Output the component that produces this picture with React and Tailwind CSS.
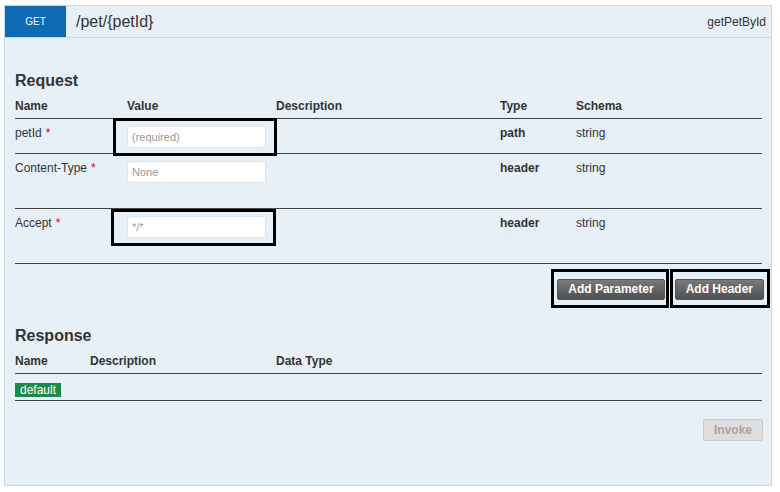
import React from 'react';

const font = { fontFamily: '"Liberation Sans", Arial, sans-serif' };

const params = [
  { name: 'petId', placeholder: '(required)', type: 'path', schema: 'string', tall: false, mark: 'a' },
  { name: 'Content-Type', placeholder: 'None', type: 'header', schema: 'string', tall: true, mark: null },
  { name: 'Accept', placeholder: '*/*', type: 'header', schema: 'string', tall: true, mark: 'b' },
];

const Field = ({ placeholder, mark }) => (
  <div className="relative w-[139px]">
    <input
      placeholder={placeholder}
      className="block h-[22px] w-full rounded-[3px] border border-[#dde4ec] bg-white px-[4px] text-[11px] text-[#333] placeholder:text-[#999] outline-none"
      style={font}
    />
    {mark === 'a' && (
      <span className="pointer-events-none absolute -left-[14px] -right-[11px] -top-[8px] -bottom-[8px] border-[3px] border-black"></span>
    )}
    {mark === 'b' && (
      <span className="pointer-events-none absolute -left-[16px] -right-[10px] -top-[7px] -bottom-[8px] border-[3px] border-black"></span>
    )}
  </div>
);

export default function App() {
  return (
    <div className="min-h-screen bg-white pl-[4px] pt-[5px] text-[#333]" style={font}>
      <div className="h-[481px] w-[768px] border border-[#c3d9ec] bg-[#e7f0f7]">
        {/* Operation header */}
        <div className="flex h-[32px] items-stretch border-b border-[#c3d9ec]">
          <div className="flex w-[61px] items-center justify-center bg-[#0f6ab4] text-[10px] text-white">GET</div>
          <div className="ml-[10px] flex flex-1 items-center text-[16px] text-[#333]">/pet/&#123;petId&#125;</div>
          <div className="flex items-center pr-[5px] text-[12px] text-[#333]">getPetById</div>
        </div>

        <div className="pl-[10px] pr-[9px]">
          {/* Request */}
          <h3 className="mt-[33px] text-[16px] font-bold leading-[20px] text-[#333]">Request</h3>
          <div className="mt-[8px] grid h-[20px] grid-cols-[112px_149px_224px_76px_1fr] border-b border-[#444] text-[12px] font-bold leading-[15px]">
            <div>Name</div>
            <div>Value</div>
            <div>Description</div>
            <div>Type</div>
            <div>Schema</div>
          </div>
          {params.map((p) => (
            <div
              key={p.name}
              className={`grid grid-cols-[112px_149px_224px_76px_1fr] border-b border-[#444] pt-[7px] text-[12px] leading-[15px] ${
                p.tall ? 'h-[55px]' : 'h-[35px]'
              }`}
            >
              <div>
                {p.name}
                <span className="ml-[4px] text-[#d00]">*</span>
              </div>
              <div>
                <Field placeholder={p.placeholder} mark={p.mark} />
              </div>
              <div></div>
              <div className="font-bold">{p.type}</div>
              <div>{p.schema}</div>
            </div>
          ))}

          {/* Parameter buttons */}
          <div className="-mr-[2px] mt-[15px] flex justify-end gap-[10px]">
            <div className="relative flex">
              <button className="h-[21px] rounded-[2px] border border-[#555] bg-gradient-to-b from-[#7a7a7a] to-[#4f4f4f] px-[10px] text-[12px] font-bold leading-[15px] text-white">
                Add Parameter
              </button>
              <span className="pointer-events-none absolute -left-[6px] -right-[4px] -top-[10px] -bottom-[8px] border-[3px] border-black"></span>
            </div>
            <div className="relative flex">
              <button className="h-[21px] rounded-[2px] border border-[#555] bg-gradient-to-b from-[#7a7a7a] to-[#4f4f4f] px-[10px] text-[12px] font-bold leading-[15px] text-white">
                Add Header
              </button>
              <span className="pointer-events-none absolute -left-[5px] -right-[6px] -top-[10px] -bottom-[8px] border-[3px] border-black"></span>
            </div>
          </div>

          {/* Response */}
          <h3 className="mt-[26px] text-[16px] font-bold leading-[20px] text-[#333]">Response</h3>
          <div className="mt-[8px] grid h-[20px] grid-cols-[75px_186px_1fr] border-b border-[#444] text-[12px] font-bold leading-[15px]">
            <div>Name</div>
            <div>Description</div>
            <div>Data Type</div>
          </div>
          <div className="flex h-[27px] items-start border-b border-[#444] pt-[9px]">
            <span className="block bg-[#1d8a48] px-[5px] text-[12px] leading-[14px] text-white">default</span>
          </div>

          <div className="-mr-[1px] mt-[18px] flex justify-end">
            <button
              disabled
              className="h-[22px] rounded-[2px] border border-[#ccc] bg-[#dedede] px-[10px] text-[12px] font-bold leading-[15px] text-[#a5a5a5]"
            >
              Invoke
            </button>
          </div>
        </div>
      </div>
    </div>
  );
}
